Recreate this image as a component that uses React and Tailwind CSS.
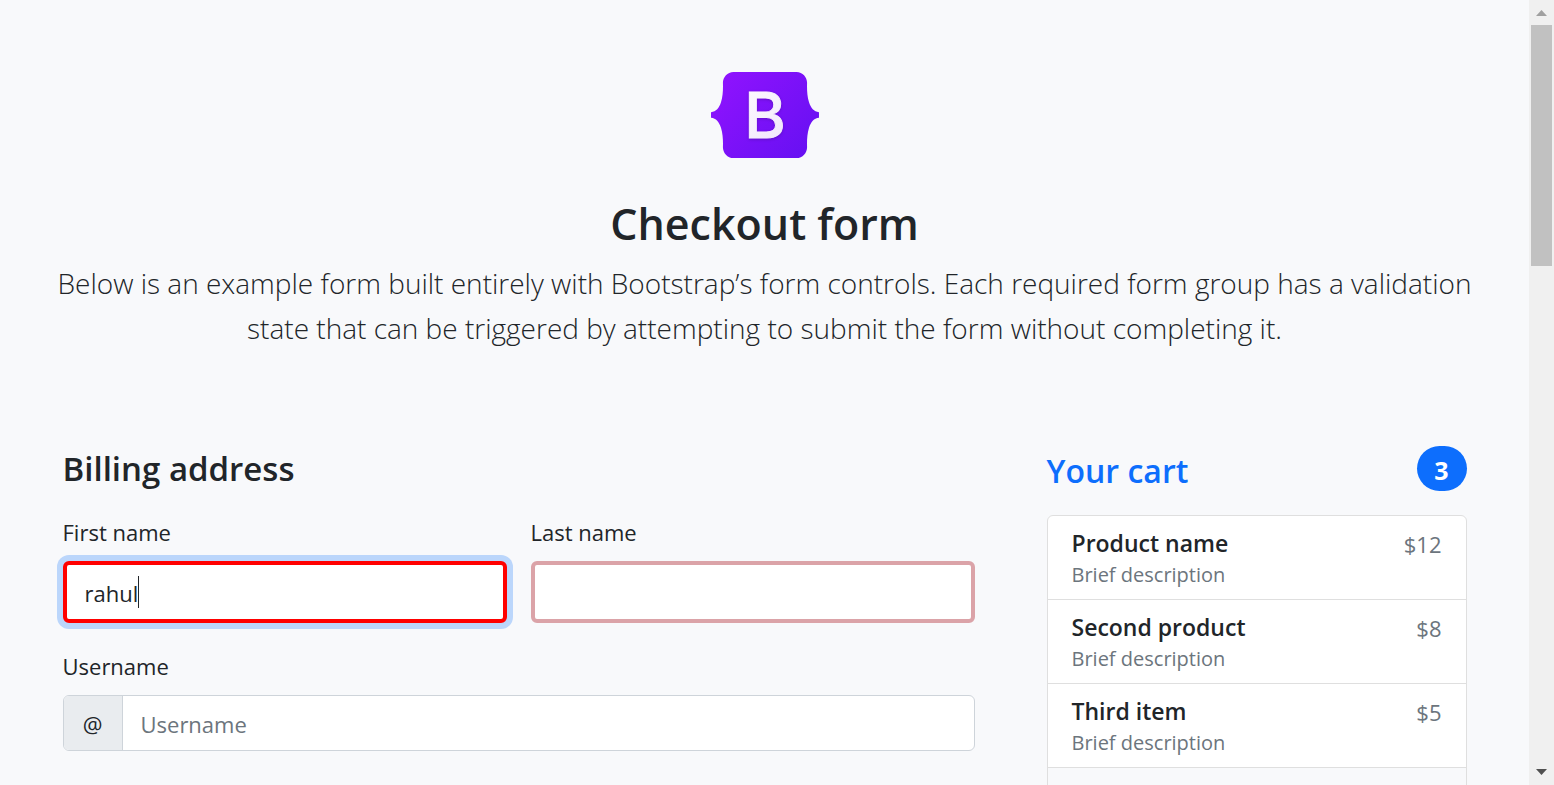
import React from "react";

const products = [
  { name: "Product name", description: "Brief description", price: "$12" },
  { name: "Second product", description: "Brief description", price: "$8" },
  { name: "Third item", description: "Brief description", price: "$5" },
];

function Logo() {
  return (
    <svg className="h-[86px] w-[108px]" viewBox="0 0 118 94" role="img" aria-label="Bootstrap">
      <defs>
        <linearGradient id="logo-fill" x1="10" y1="0" x2="108" y2="94" gradientUnits="userSpaceOnUse">
          <stop stopColor="#9013fe" />
          <stop offset="1" stopColor="#6610f2" />
        </linearGradient>
        <linearGradient id="letter-fill" x1="0" y1="0" x2="0.6" y2="1">
          <stop stopColor="#ffffff" />
          <stop offset="1" stopColor="#f1e5fc" />
        </linearGradient>
      </defs>
      <path
        fill="url(#logo-fill)"
        d="M24.509 0c-6.733 0-11.715 5.893-11.492 12.284.214 6.14-.064 14.092-2.066 20.577C8.943 39.365 5.547 43.485 0 44.014v5.972c5.547.529 8.943 4.649 10.951 11.153 2.002 6.485 2.28 14.437 2.066 20.577C12.794 88.106 17.776 94 24.51 94H93.5c6.733 0 11.714-5.893 11.491-12.284-.214-6.14.064-14.092 2.066-20.577 2.009-6.504 5.396-10.624 10.943-11.153v-5.972c-5.547-.529-8.934-4.649-10.943-11.153-2.002-6.484-2.28-14.437-2.066-20.577C105.214 5.894 100.233 0 93.5 0H24.508z"
      />
      <text
        x="59"
        y="72"
        textAnchor="middle"
        fill="url(#letter-fill)"
        stroke="url(#letter-fill)"
        strokeWidth="1"
        className="font-['Inter',sans-serif] text-[69px] font-medium drop-shadow-[0_1px_2px_rgba(0,0,0,0.2)]"
      >
        B
      </text>
    </svg>
  );
}

function ScrollTrack() {
  return (
    <div className="flex w-[25px] shrink-0 flex-col items-center bg-[#f0f0f0]" aria-hidden="true">
      <svg className="h-[25px] w-[25px] shrink-0" viewBox="0 0 25 25">
        <path d="M7 16h11l-5.5-6z" fill="#a0a0a0" />
      </svg>
      <div className="h-[241px] w-[21px] bg-[#c1c1c1]" />
      <svg className="mt-auto h-[25px] w-[25px] shrink-0" viewBox="0 0 25 25">
        <path d="M7 9h11l-5.5 6z" fill="#505050" />
      </svg>
    </div>
  );
}

export default function App() {
  return (
    <div className="flex h-screen overflow-hidden bg-[#f8f9fb] font-['Open_Sans','Noto_Sans',sans-serif] text-[22px] leading-[38px] text-[#212529]">
      <div className="min-w-0 flex-1 overflow-y-auto [scrollbar-width:none]">
        <div className="mx-auto max-w-[1440px] px-[18px]">
          <header className="-mx-[18px] flex flex-col items-center pt-[72px] pb-[95px] text-center">
            <Logo />
            <h1 className="mt-[37px] mb-2 text-[43px] leading-[58px] font-semibold">Checkout form</h1>
            <p className="text-[28px] leading-[45px] font-light">
              Below is an example form built entirely with Bootstrap’s form controls. Each required form group has a
              validation state that can be triggered by attempting to submit the form without completing it.
            </p>
          </header>

          <main className="grid grid-cols-[76fr_35fr] gap-[72px]">
            <form>
              <h2 className="mb-[22px] text-[33px] leading-[45px] font-semibold">Billing address</h2>
              <div className="grid grid-cols-2 gap-6">
                <div>
                  <label htmlFor="first-name" className="mb-2.5 block">First name</label>
                  <div className="relative">
                    <input
                      id="first-name"
                      type="text"
                      defaultValue="rahul"
                      className="block h-[62px] w-full rounded-md border-4 border-[#ff0000] bg-white px-[18px] pt-0.5 ring-6 ring-[#bbd6fb] outline-none"
                    />
                    <span className="absolute top-[15px] left-[75px] h-8 w-px bg-[#212529]" />
                  </div>
                </div>
                <div>
                  <label htmlFor="last-name" className="mb-2.5 block">Last name</label>
                  <input
                    id="last-name"
                    type="text"
                    className="block h-[62px] w-full rounded-md border-4 border-[#dba3a8] bg-white px-[18px] pt-0.5 outline-none"
                  />
                </div>
                <div className="col-span-2">
                  <label htmlFor="username" className="mb-2.5 block">Username</label>
                  <div className="flex h-14 overflow-hidden rounded-md border border-[#ced4da] bg-white">
                    <span className="flex w-[59px] items-center justify-center border-r border-[#ced4da] bg-[#e9ecef] pt-0.5">@</span>
                    <input
                      id="username"
                      type="text"
                      placeholder="Username"
                      className="min-w-0 flex-1 px-[18px] pt-0.5 outline-none placeholder:text-[#6c757d]"
                    />
                  </div>
                </div>
              </div>
            </form>

            <section>
              <div className="mb-6 flex items-center justify-between">
                <h2 className="mt-1 text-[32px] leading-[41px] font-semibold text-[#0d6efd]">Your cart</h2>
                <span className="flex h-[45px] w-[50px] items-center justify-center rounded-full bg-[#0d6efd] pt-0.5 text-[25px] font-bold text-white">
                  3
                </span>
              </div>
              <ul className="overflow-hidden rounded-md border border-[#dfdfdf] bg-white">
                {products.map((product) => (
                  <li key={product.name} className="flex h-[84px] justify-between border-b border-[#dfdfdf] px-6 pt-3">
                    <div>
                      <h3 className="text-[23px] leading-[31px] font-semibold">{product.name}</h3>
                      <p className="text-[20px] leading-8 text-[#6c757d]">{product.description}</p>
                    </div>
                    <span className="leading-8 text-[#6c757d]">{product.price}</span>
                  </li>
                ))}
                <li className="h-[84px] bg-[#f8f9fb]" />
              </ul>
            </section>
          </main>
        </div>
      </div>
      <ScrollTrack />
    </div>
  );
}
